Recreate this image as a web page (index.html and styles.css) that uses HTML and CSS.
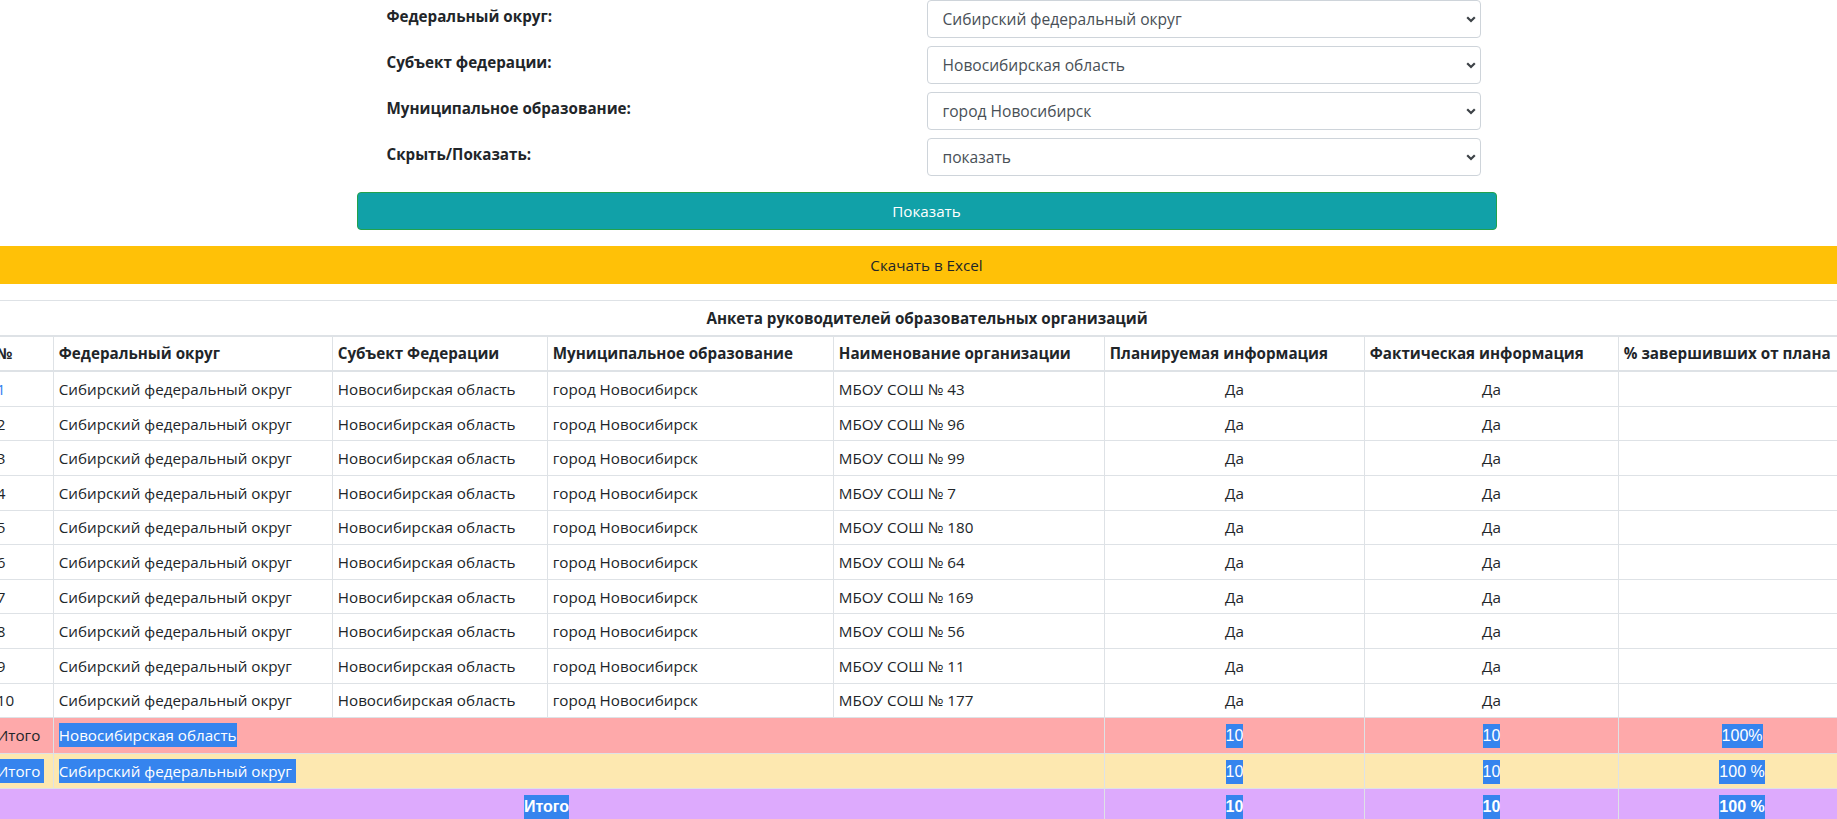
FILE: index.html
```html
<!DOCTYPE html>
<html lang="ru">
<head>
<meta charset="utf-8">
<title>Анкета руководителей образовательных организаций</title>
<link rel="stylesheet" href="styles.css">
</head>
<body>
<div class="page">
  <form class="filters">
    <div class="field">
      <label class="field-label">Федеральный округ:</label>
      <div class="select-wrap">
        <select class="select"><option>Сибирский федеральный округ</option></select>
        <svg class="chevron" width="10" height="7" viewBox="0 0 10 7"><path d="M1.2 1.2 5 5 8.8 1.2"/></svg>
      </div>
    </div>
    <div class="field">
      <label class="field-label">Субъект федерации:</label>
      <div class="select-wrap">
        <select class="select"><option>Новосибирская область</option></select>
        <svg class="chevron" width="10" height="7" viewBox="0 0 10 7"><path d="M1.2 1.2 5 5 8.8 1.2"/></svg>
      </div>
    </div>
    <div class="field">
      <label class="field-label">Муниципальное образование:</label>
      <div class="select-wrap">
        <select class="select"><option>город Новосибирск</option></select>
        <svg class="chevron" width="10" height="7" viewBox="0 0 10 7"><path d="M1.2 1.2 5 5 8.8 1.2"/></svg>
      </div>
    </div>
    <div class="field">
      <label class="field-label">Скрыть/Показать:</label>
      <div class="select-wrap">
        <select class="select"><option>показать</option></select>
        <svg class="chevron" width="10" height="7" viewBox="0 0 10 7"><path d="M1.2 1.2 5 5 8.8 1.2"/></svg>
      </div>
    </div>
    <button class="btn-show" type="button">Показать</button>
  </form>

  <button class="btn-excel" type="button">Скачать в Excel</button>

  <table class="report">
    <colgroup>
      <col class="w-num">
      <col class="w-fo">
      <col class="w-subj">
      <col class="w-mun">
      <col class="w-org">
      <col class="w-plan">
      <col class="w-fact">
      <col class="w-pct">
    </colgroup>
    <thead>
      <tr><th colspan="8" class="title">Анкета руководителей образовательных организаций</th></tr>
      <tr>
        <th class="lead">№</th>
        <th>Федеральный округ</th>
        <th>Субъект Федерации</th>
        <th>Муниципальное образование</th>
        <th>Наименование организации</th>
        <th>Планируемая информация</th>
        <th>Фактическая информация</th>
        <th>% завершивших от плана</th>
      </tr>
    </thead>
    <tbody>
      <tr><td class="lead first-num">1</td><td>Сибирский федеральный округ</td><td>Новосибирская область</td><td>город Новосибирск</td><td>МБОУ СОШ № 43</td><td class="c">Да</td><td class="c">Да</td><td></td></tr>
      <tr><td class="lead">2</td><td>Сибирский федеральный округ</td><td>Новосибирская область</td><td>город Новосибирск</td><td>МБОУ СОШ № 96</td><td class="c">Да</td><td class="c">Да</td><td></td></tr>
      <tr><td class="lead">3</td><td>Сибирский федеральный округ</td><td>Новосибирская область</td><td>город Новосибирск</td><td>МБОУ СОШ № 99</td><td class="c">Да</td><td class="c">Да</td><td></td></tr>
      <tr><td class="lead">4</td><td>Сибирский федеральный округ</td><td>Новосибирская область</td><td>город Новосибирск</td><td>МБОУ СОШ № 7</td><td class="c">Да</td><td class="c">Да</td><td></td></tr>
      <tr><td class="lead">5</td><td>Сибирский федеральный округ</td><td>Новосибирская область</td><td>город Новосибирск</td><td>МБОУ СОШ № 180</td><td class="c">Да</td><td class="c">Да</td><td></td></tr>
      <tr><td class="lead">6</td><td>Сибирский федеральный округ</td><td>Новосибирская область</td><td>город Новосибирск</td><td>МБОУ СОШ № 64</td><td class="c">Да</td><td class="c">Да</td><td></td></tr>
      <tr><td class="lead">7</td><td>Сибирский федеральный округ</td><td>Новосибирская область</td><td>город Новосибирск</td><td>МБОУ СОШ № 169</td><td class="c">Да</td><td class="c">Да</td><td></td></tr>
      <tr><td class="lead">8</td><td>Сибирский федеральный округ</td><td>Новосибирская область</td><td>город Новосибирск</td><td>МБОУ СОШ № 56</td><td class="c">Да</td><td class="c">Да</td><td></td></tr>
      <tr><td class="lead">9</td><td>Сибирский федеральный округ</td><td>Новосибирская область</td><td>город Новосибирск</td><td>МБОУ СОШ № 11</td><td class="c">Да</td><td class="c">Да</td><td></td></tr>
      <tr><td class="lead">10</td><td>Сибирский федеральный округ</td><td>Новосибирская область</td><td>город Новосибирск</td><td>МБОУ СОШ № 177</td><td class="c">Да</td><td class="c">Да</td><td></td></tr>
      <tr class="sum-region">
        <td class="lead">Итого</td>
        <td colspan="4"><span class="hl">Новосибирская область</span></td>
        <td class="c"><span class="hl num">10</span></td>
        <td class="c"><span class="hl num">10</span></td>
        <td class="c"><span class="hl num">100%</span></td>
      </tr>
      <tr class="sum-district">
        <td class="lead"><span class="hl">Итого </span></td>
        <td colspan="4"><span class="hl">Сибирский федеральный округ </span></td>
        <td class="c"><span class="hl num">10</span></td>
        <td class="c"><span class="hl num">10</span></td>
        <td class="c"><span class="hl num">100 %</span></td>
      </tr>
      <tr class="sum-total">
        <td colspan="5" class="c"><span class="hl num">Итого</span></td>
        <td class="c"><span class="hl num">10</span></td>
        <td class="c"><span class="hl num">10</span></td>
        <td class="c"><span class="hl num">100 %</span></td>
      </tr>
    </tbody>
  </table>
</div>
</body>
</html>
```

FILE: styles.css
```css
html, body {
  margin: 0;
  overflow: hidden;
}

body {
  font-family: "Open Sans", "Noto Sans", sans-serif;
  font-size: 15.2px;
  line-height: 24px;
  color: #212529;
  background: #fff;
}

.page {
  width: 1877px;
  margin-left: -12px;
}

/* filter form */
.filters {
  width: 1140px;
  margin: 0 auto;
  display: flex;
  flex-direction: column;
  gap: 8px;
}

.field {
  display: grid;
  grid-template-columns: 570px 554px;
  height: 38px;
}

.field-label {
  padding-left: 30px;
  padding-top: 4px;
  font-weight: 700;
  line-height: 24px;
}

.select-wrap {
  position: relative;
}

.select {
  -webkit-appearance: none;
  appearance: none;
  width: 100%;
  height: 38px;
  margin: 0;
  padding: 0 30px 0 15px;
  border: 1px solid #ced4da;
  border-radius: 4px;
  background: #fff;
  color: #495057;
  font-family: inherit;
  font-size: 15.6px;
}

.chevron {
  position: absolute;
  right: 5px;
  top: 16px;
  fill: none;
  stroke: #3d4247;
  stroke-width: 2.2;
}

.btn-show {
  margin-top: 8px;
  height: 38px;
  width: 100%;
  border: 1px solid #22a24c;
  border-radius: 4px;
  background: #11a1a8;
  color: #fff;
  font-family: inherit;
  font-size: 15.2px;
  padding: 0;
}

.btn-excel {
  display: block;
  margin-top: 16px;
  width: 100%;
  height: 38px;
  border: 0;
  background: #ffc107;
  color: #212529;
  font-family: inherit;
  font-size: 15.2px;
  padding: 0;
}

/* report table */
.report {
  margin-top: 16px;
  width: 1877px;
  table-layout: fixed;
  border-collapse: collapse;
}

.w-num { width: 65px; }
.w-fo { width: 279px; }
.w-subj { width: 215px; }
.w-mun { width: 286px; }
.w-org { width: 271px; }
.w-plan { width: 260px; }
.w-fact { width: 254px; }
.w-pct { width: 247px; }

.report th,
.report td {
  padding: 4.8px;
  border: 1px solid #dee2e6;
  line-height: 24px;
  text-align: left;
  vertical-align: top;
  white-space: nowrap;
  overflow: hidden;
}

.report .lead {
  padding-left: 7.8px;
}

.report thead th {
  font-weight: 700;
  border-bottom-width: 2px;
}

.report th.title {
  text-align: center;
}

.report .c {
  text-align: center;
}

.first-num {
  color: #2f7ff0;
}

.hl {
  display: inline-block;
  background: #3584ee;
  color: #fff;
  line-height: 24px;
  white-space: pre;
}

.num {
  font-family: "Liberation Sans", Arial, sans-serif;
  font-size: 16px;
}

.sum-region td {
  background: #fea9aa;
}

.sum-district td {
  background: #fde8b0;
}

.sum-total td {
  background: #ddaafd;
}

.sum-total .hl {
  font-weight: 700;
}
```
